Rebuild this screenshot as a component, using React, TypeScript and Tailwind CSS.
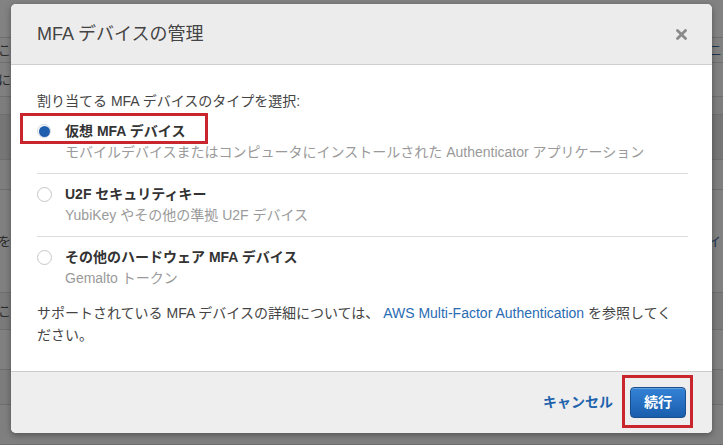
import React from 'react';

const font = { fontFamily: '"Liberation Sans", "Noto Sans CJK JP", sans-serif' };

type Row = { h: string; left?: string; right?: string; tone: string };

// behind-the-dialog page rows, dimmed by the overlay
const rows: Row[] = [
    { h: 'h-[38px]', tone: 'bg-[#828282]' },
    { h: 'h-[25px]', left: 'こ', right: '二', tone: 'bg-[#808080]' },
    { h: 'h-[34px]', left: 'に', tone: 'bg-[#808080]' },
    { h: 'h-[18px]', tone: 'bg-[#7d7d7d]' },
    { h: 'h-[45px]', tone: 'bg-[#767676]' },
    { h: 'h-[30px]', tone: 'bg-[#7e7e7e]' },
    { h: 'h-[103px]', left: 'を', right: 'イ', tone: 'bg-[#808080]' },
    { h: 'h-[37px]', left: 'こ', tone: 'bg-[#7a7a7a]' },
    { h: 'h-[40px]', tone: 'bg-[#808080]' },
    { h: 'h-[35px]', tone: 'bg-[#7c7c7c]' },
    { h: 'h-[40px]', tone: 'bg-[#7f7f7f]' },
];

const options = [
    { label: '仮想 MFA デバイス', desc: 'モバイルデバイスまたはコンピュータにインストールされた Authenticator アプリケーション', checked: true },
    { label: 'U2F セキュリティキー', desc: 'YubiKey やその他の準拠 U2F デバイス', checked: false },
    { label: 'その他のハードウェア MFA デバイス', desc: 'Gemalto トークン', checked: false },
];

const Radio = ({ checked }: { checked: boolean }) =>
    checked ? (
        <span className="flex h-[14px] w-[14px] shrink-0 items-center justify-center rounded-full border border-[#d5dbe3] bg-white">
            <span className="h-[11px] w-[11px] rounded-full bg-[#1f5fae]" />
        </span>
    ) : (
        <span className="h-[15px] w-[15px] shrink-0 rounded-full border border-[#c6c6c6] bg-white" />
    );

const App = () => {
    return (
        <div className="relative h-[445px] w-[723px] overflow-hidden bg-[#7f7f7f]" style={font}>
            <div className="flex flex-col">
                {rows.map((r, i) => (
                    <div
                        key={i}
                        className={`flex items-center justify-between border-b border-[#6e6e6e] ${r.h} ${r.tone} text-[13px] leading-none text-[#2a2a2a]`}
                    >
                        <span className="-ml-[2px]">{r.left}</span>
                        <span className="mr-[2px] text-[#1f3550]">{r.right}</span>
                    </div>
                ))}
            </div>

            {/* dialog */}
            <div className="absolute left-[11px] top-[4px] flex h-[429px] w-[701px] flex-col overflow-hidden rounded-[5px] bg-white shadow-[0_2px_6px_rgba(0,0,0,0.35)]">
                <div className="flex h-[61px] shrink-0 items-center justify-between border-b border-[#cfcfcf] bg-[#ececec] pl-[26px] pr-[25px]">
                    <h1 className="text-[18px] leading-none text-[#444444]">MFA デバイスの管理</h1>
                    <svg width="11" height="11" viewBox="0 0 11 11">
                        <path d="M1.5 1.5 L9.5 9.5 M9.5 1.5 L1.5 9.5" stroke="#8a8a8a" strokeWidth="2.8" strokeLinecap="round" />
                    </svg>
                </div>

                <div className="flex flex-1 flex-col pl-[26px] pr-[24px] pt-[26px]">
                    <p className="text-[14px] leading-[20px] text-[#444444]">割り当てる MFA デバイスのタイプを選択:</p>
                    <div className="flex flex-col">
                        {options.map((o, i) => (
                            <div
                                key={o.label}
                                className={`flex py-[10px] ${i < options.length - 1 ? 'border-b border-[#dddddd]' : ''}`}
                            >
                                <div className="flex h-[20px] w-[28px] items-center">
                                    <Radio checked={o.checked} />
                                </div>
                                <div className="flex flex-col">
                                    <span className="text-[14px] font-bold leading-[20px] text-[#333333]">{o.label}</span>
                                    <span className="text-[14px] leading-[22px] text-[#9a9a9a]">{o.desc}</span>
                                </div>
                            </div>
                        ))}
                    </div>
                    <p className="mt-[3px] text-[14px] leading-[22px] text-[#444444]">
                        <span className="whitespace-nowrap">
                            サポートされている MFA デバイスの詳細については、{' '}
                            <span className="text-[#2a6cb3]">AWS Multi-Factor Authentication</span> を参照してく
                        </span>
                        <br />
                        ださい。
                    </p>
                </div>

                <div className="flex h-[62px] shrink-0 items-center justify-end gap-[17px] border-t border-[#cccccc] bg-[#eeeeee] pr-[26px]">
                    <span className="text-[14px] font-bold text-[#1f63ad]">キャンセル</span>
                    <button className="h-[31px] w-[56px] rounded-[4px] border border-[#1a4f8e] bg-gradient-to-b from-[#3483d6] to-[#1a5dad] text-[14px] font-bold text-white shadow-[inset_0_1px_0_rgba(255,255,255,0.25)]">
                        続行
                    </button>
                </div>
            </div>

            {/* annotation boxes */}
            <div className="absolute left-[20px] top-[113px] h-[31px] w-[188px] border-[3px] border-[#c9252c]" />
            <div className="absolute left-[622px] top-[375px] h-[53px] w-[71px] border-[3px] border-[#c9252c]" />
        </div>
    );
};

export default App;
